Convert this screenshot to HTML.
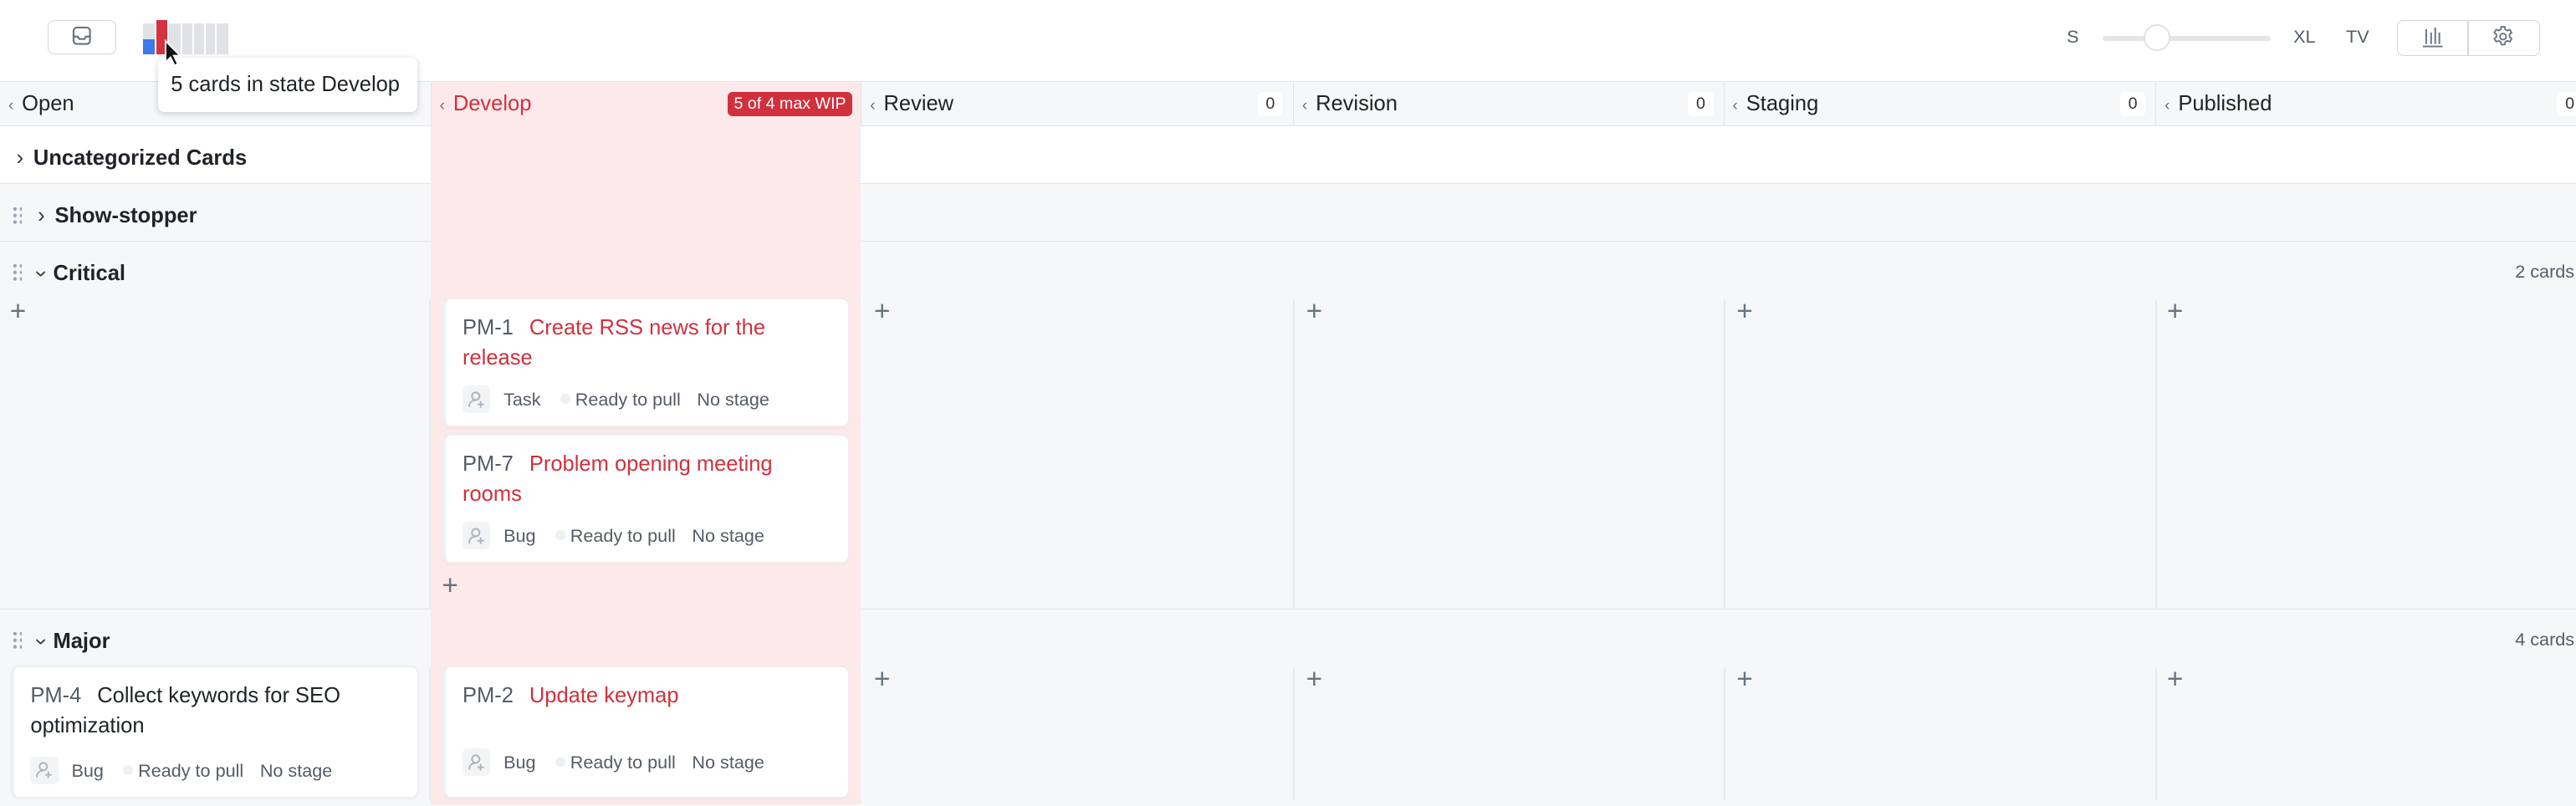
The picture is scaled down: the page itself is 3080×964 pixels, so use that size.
<!DOCTYPE html>
<html><head><style>
html{zoom:1.9643}
*{box-sizing:border-box;margin:0;padding:0}
body{width:1568px;height:485px;overflow:hidden;background:#fff;font-family:"Liberation Sans",sans-serif;color:#1f2328;position:relative}
.a{position:absolute}
.top{left:0;top:0;width:1568px;height:50px;background:#fff;border-bottom:1px solid #e2e4e9}
.hdr{left:0;top:50px;width:1568px;height:27px;background:#f6f7f9;border-bottom:1px solid #e2e4e9}
.col{top:50px;height:27px;font-size:13px;line-height:27px;border-left:1px solid #e2e4e9}
.col .ch{color:#6b7280;font-size:10px;margin:0 5px 0 5px}
.cnt{position:absolute;right:6px;top:6px;background:#fff;border-radius:3px;font-size:10px;line-height:15px;padding:0 5px;color:#333}
.row{left:0;width:1568px;border-bottom:1px solid #e2e4e9}
.gname{font-size:13px;font-weight:bold;line-height:35px;margin-top:2px}
.dots{position:absolute;left:7px;width:6px;height:12px;background-image:radial-gradient(circle,#9ca3af 1px,transparent 1.2px);background-size:4px 4px}
.plus{font-size:17px;color:#6b7280;font-weight:300;line-height:1}
.card{background:#fff;border-radius:4px;box-shadow:0 0 0 1px #eee,0 1px 2px rgba(0,0,0,.06);border-left:2px solid #f0f1f3;padding:9px 10px 6px;font-size:13px;line-height:18px}
.id{color:#555c66;margin-right:6px}
.t{color:#d0313d}
.meta{position:absolute;left:10px;bottom:7px;font-size:11px;color:#555c66;display:flex;align-items:center;gap:6px}
.av{width:17px;height:17px;background:#f3f4f6;border-radius:3px;display:inline-flex;align-items:center;justify-content:center}
.dot{width:6px;height:6px;border-radius:50%;background:#eef0f2;display:inline-block;margin-left:6px;margin-right:-3px}
.vl{width:1px;background:#e8e9ee}
</style></head><body>
<div class="a top"></div>
<div class="a" style="left:29px;top:12px;width:42px;height:21px;border:1px solid #d4d6dc;border-radius:4px"></div>
<svg class="a" style="left:44px;top:16px" width="12" height="12" viewBox="0 0 12 12"><rect x="1" y="1" width="10" height="10" rx="2" fill="none" stroke="#6b7280" stroke-width="1.1"/><path d="M1 6.5h2.5l1 1.5h3l1-1.5H11" fill="none" stroke="#6b7280" stroke-width="1.1"/></svg>
<div class="a" style="left:87px;top:14px;width:7px;height:19px;background:#e0e2e6"></div>
<div class="a" style="left:87px;top:24px;width:7px;height:9px;background:#3b7ae8"></div>
<div class="a" style="left:95px;top:12px;width:7px;height:21px;background:#d8313f"></div>
<div class="a" style="left:103px;top:14px;width:7px;height:19px;background:#e0e2e6"></div>
<div class="a" style="left:111px;top:14px;width:6px;height:19px;background:#e0e2e6"></div>
<div class="a" style="left:118px;top:14px;width:6px;height:19px;background:#e0e2e6"></div>
<div class="a" style="left:125px;top:14px;width:6px;height:19px;background:#e0e2e6"></div>
<div class="a" style="left:132px;top:14px;width:7px;height:19px;background:#e0e2e6"></div>
<div class="a" style="left:1258px;top:16px;font-size:11px;color:#555c66">S</div>
<div class="a" style="left:1280px;top:22px;width:102px;height:3px;background:#e4e5e9;border-radius:2px"></div>
<div class="a" style="left:1305px;top:15px;width:16px;height:16px;border-radius:50%;background:#fff;border:1.5px solid #e0e2e6"></div>
<div class="a" style="left:1396px;top:16px;font-size:11px;color:#555c66">XL</div>
<div class="a" style="left:1428px;top:16px;font-size:11px;color:#555c66">TV</div>
<div class="a" style="left:1459px;top:12px;width:87px;height:22px;border:1px solid #d4d6dc;border-radius:4px"></div>
<div class="a" style="left:1502px;top:12px;width:1px;height:22px;background:#d4d6dc"></div>
<svg class="a" style="left:1474px;top:16px" width="14" height="13"><path d="M3 2v9M6 4v7M8.5 1v10M11 4v7M1 12.5h12" stroke="#6b7280" stroke-width="1"/></svg>
<svg class="a" style="left:1516px;top:15px" width="15" height="15" viewBox="0 0 24 24"><path d="M10.3 2.5h3.4l.5 2.6 2 1.1 2.5-.9 1.7 2.9-2 1.8v2.3l2 1.8-1.7 2.9-2.5-.9-2 1.1-.5 2.6h-3.4l-.5-2.6-2-1.1-2.5.9-1.7-2.9 2-1.8v-2.3l-2-1.8 1.7-2.9 2.5.9 2-1.1z" fill="none" stroke="#6b7280" stroke-width="1.5"/><circle cx="12" cy="12" r="3" fill="none" stroke="#6b7280" stroke-width="1.5"/></svg>

<div class="a hdr"></div>
<div class="a row" style="top:77px;height:35px;background:#fff"></div>
<div class="a row" style="top:112px;height:35px;background:#f6f7f9"></div>
<div class="a row" style="top:147px;height:224px;background:#f6f7f9"></div>
<div class="a row" style="top:371px;height:120px;background:#f6f7f9;border:0"></div>
<div class="a" style="left:262px;top:50px;width:262px;height:440px;background:#fde8ea"></div>
<div class="a vl" style="left:787px;top:182px;height:189px"></div>
<div class="a vl" style="left:1049px;top:182px;height:189px"></div>
<div class="a vl" style="left:1312px;top:182px;height:189px"></div>
<div class="a vl" style="left:787px;top:407px;height:80px"></div>
<div class="a vl" style="left:1049px;top:407px;height:80px"></div>
<div class="a vl" style="left:1312px;top:407px;height:80px"></div>
<div class="a vl" style="left:261px;top:182px;height:189px"></div>
<div class="a vl" style="left:261px;top:407px;height:80px"></div>

<div class="a col" style="left:0;width:262px;border:0"><span class="ch">&lsaquo;</span>Open</div>
<div class="a col" style="left:262px;width:262px;color:#d0313d"><span class="ch">&lsaquo;</span>Develop<span class="cnt" style="background:#d0313d;color:#fff;font-size:10px;padding:0 4px;top:6px;right:5px">5 of 4 max WIP</span></div>
<div class="a col" style="left:524px;width:263px"><span class="ch">&lsaquo;</span>Review<span class="cnt">0</span></div>
<div class="a col" style="left:787px;width:262px"><span class="ch">&lsaquo;</span>Revision<span class="cnt">0</span></div>
<div class="a col" style="left:1049px;width:263px"><span class="ch">&lsaquo;</span>Staging<span class="cnt">0</span></div>
<div class="a col" style="left:1312px;width:256px"><span class="ch">&lsaquo;</span>Published<span class="cnt" style="right:-4px">0</span></div>

<div class="a gname" style="left:10px;top:77px"><span style="font-weight:normal;color:#333;margin-right:6px">&rsaquo;</span>Uncategorized Cards</div>
<div class="a dots" style="top:125px"></div>
<div class="a gname" style="left:23px;top:112px"><span style="font-weight:normal;color:#333;margin-right:6px">&rsaquo;</span>Show-stopper</div>
<div class="a dots" style="top:160px"></div>
<div class="a gname" style="left:23px;top:147px"><span style="font-weight:normal;color:#333;margin-right:5px;display:inline-block;transform:rotate(90deg)">&rsaquo;</span>Critical</div>
<div class="a" style="right:1px;top:159px;font-size:11px;color:#555c66">2 cards</div>
<div class="a dots" style="top:384px"></div>
<div class="a gname" style="left:23px;top:371px"><span style="font-weight:normal;color:#333;margin-right:5px;display:inline-block;transform:rotate(90deg)">&rsaquo;</span>Major</div>
<div class="a" style="right:1px;top:383px;font-size:11px;color:#555c66">4 cards</div>

<div class="a plus" style="left:6px;top:181px">+</div>
<div class="a plus" style="left:532px;top:181px">+</div>
<div class="a plus" style="left:795px;top:181px">+</div>
<div class="a plus" style="left:1057px;top:181px">+</div>
<div class="a plus" style="left:1319px;top:181px">+</div>
<div class="a plus" style="left:269px;top:348px">+</div>
<div class="a plus" style="left:532px;top:405px">+</div>
<div class="a plus" style="left:795px;top:405px">+</div>
<div class="a plus" style="left:1057px;top:405px">+</div>
<div class="a plus" style="left:1319px;top:405px">+</div>

<div class="a card" style="left:270px;top:182px;width:246px;height:77px"><span class="id">PM-1</span> <span class="t">Create RSS news for the release</span>
<div class="meta"><span class="av"><svg width="11" height="11"><circle cx="5" cy="3.5" r="2.3" fill="none" stroke="#b0b4bb"/><path d="M1 10c0-3 2-4 4-4" fill="none" stroke="#b0b4bb"/><path d="M8 6.5v4M6 8.5h4" stroke="#b0b4bb"/></svg></span><span style="margin-left:2px">Task</span><span class="dot"></span>Ready to pull<span style="margin-left:4px">No stage</span></div></div>
<div class="a card" style="left:270px;top:265px;width:246px;height:77px"><span class="id">PM-7</span> <span class="t">Problem opening meeting rooms</span>
<div class="meta"><span class="av"><svg width="11" height="11"><circle cx="5" cy="3.5" r="2.3" fill="none" stroke="#b0b4bb"/><path d="M1 10c0-3 2-4 4-4" fill="none" stroke="#b0b4bb"/><path d="M8 6.5v4M6 8.5h4" stroke="#b0b4bb"/></svg></span><span style="margin-left:2px">Bug</span><span class="dot"></span>Ready to pull<span style="margin-left:4px">No stage</span></div></div>
<div class="a card" style="left:7px;top:406px;width:247px;height:79px;color:#1f2328"><span class="id">PM-4</span> Collect keywords for SEO optimization
<div class="meta"><span class="av"><svg width="11" height="11"><circle cx="5" cy="3.5" r="2.3" fill="none" stroke="#b0b4bb"/><path d="M1 10c0-3 2-4 4-4" fill="none" stroke="#b0b4bb"/><path d="M8 6.5v4M6 8.5h4" stroke="#b0b4bb"/></svg></span><span style="margin-left:2px">Bug</span><span class="dot"></span>Ready to pull<span style="margin-left:4px">No stage</span></div></div>
<div class="a card" style="left:270px;top:406px;width:246px;height:79px"><span class="id">PM-2</span> <span class="t">Update keymap</span>
<div class="meta" style="bottom:12px"><span class="av"><svg width="11" height="11"><circle cx="5" cy="3.5" r="2.3" fill="none" stroke="#b0b4bb"/><path d="M1 10c0-3 2-4 4-4" fill="none" stroke="#b0b4bb"/><path d="M8 6.5v4M6 8.5h4" stroke="#b0b4bb"/></svg></span><span style="margin-left:2px">Bug</span><span class="dot"></span>Ready to pull<span style="margin-left:4px">No stage</span></div></div>

<div class="a" style="left:96px;top:35px;width:158px;height:33px;background:#fff;border-radius:4px;box-shadow:0 1px 4px rgba(0,0,0,.18);font-size:13px;line-height:33px;padding-left:8px;color:#1f2328">5 cards in state Develop</div>
<svg class="a" style="left:100px;top:24px" width="12" height="18"><path d="M1 1v13l3-3 2.5 5 2-1-2.5-5h4z" fill="#111" stroke="#fff" stroke-width="1"/></svg>
</body></html>
